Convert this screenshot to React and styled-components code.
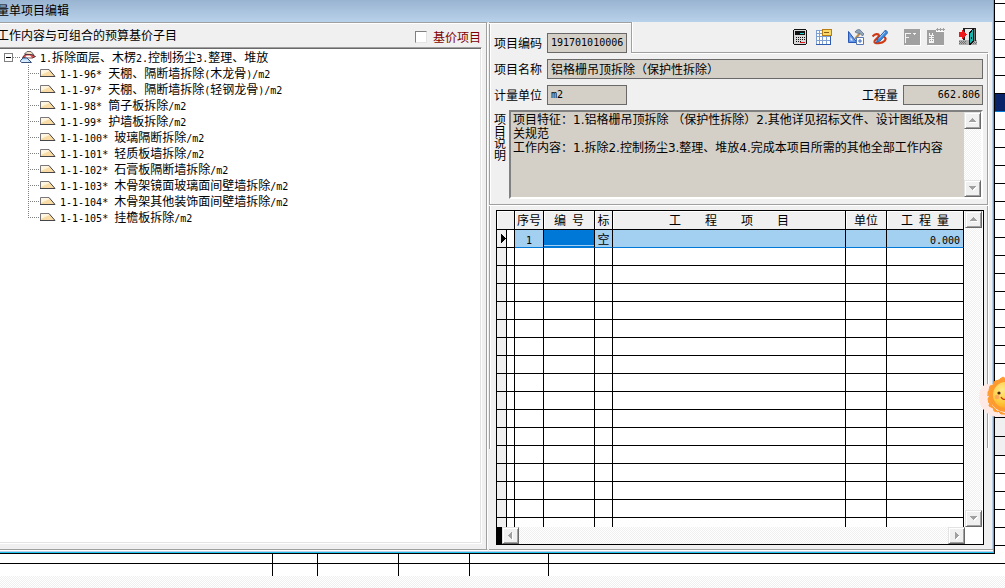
import React, { useState } from 'react';
import styled, { createGlobalStyle, css } from 'styled-components';

const items = [
    { code: '1-1-96*', name: '天棚、隔断墙拆除(木龙骨)/m2' },
    { code: '1-1-97*', name: '天棚、隔断墙拆除(轻钢龙骨)/m2' },
    { code: '1-1-98*', name: '筒子板拆除/m2' },
    { code: '1-1-99*', name: '护墙板拆除/m2' },
    { code: '1-1-100*', name: '玻璃隔断拆除/m2' },
    { code: '1-1-101*', name: '轻质板墙拆除/m2' },
    { code: '1-1-102*', name: '石膏板隔断墙拆除/m2' },
    { code: '1-1-103*', name: '木骨架镜面玻璃面间壁墙拆除/m2' },
    { code: '1-1-104*', name: '木骨架其他装饰面间壁墙拆除/m2' },
    { code: '1-1-105*', name: '挂檐板拆除/m2' },
];

const description =
    '项目特征：1.铝格栅吊顶拆除 （保护性拆除）2.其他详见招标文件、设计图纸及相关规范\n' +
    '工作内容：1.拆除2.控制扬尘3.整理、堆放4.完成本项目所需的其他全部工作内容';

const emptyRows = Array.from({ length: 15 }, (_, i) => i);

// rows of the sheet that shows behind the window
const sheetRows = [
    { h: 4 },
    ...Array.from({ length: 5 }, () => ({ h: 18 })),
    { h: 18, kind: 'selected' },
    ...Array.from({ length: 17 }, () => ({ h: 18 })),
    { h: 19, kind: 'grey' },
    { h: 19, kind: 'grey' },
    ...Array.from({ length: 5 }, () => ({ h: 18 })),
];

// latin characters are set half as wide as the chinese ones
function Mixed({ children }) {
    return children.split(/([\x20-\x7e]+)/).map((part, i) =>
        i % 2 ? <Half key={i}>{part}</Half> : part
    );
}

function Arrow({ dir }) {
    const d = {
        up: 'M4 2h1v1h1v1h1v1h1v1H1V5h1V4h1V3h1z',
        down: 'M1 2h7v1H7v1H6v1H5v1H4V5H3V4H2V3H1z',
        left: 'M6 1v7H5V7H4V6H3V5H2V4h1V3h1V2h1V1z',
        right: 'M3 1v7h1V7h1V6h1V5h1V4H6V3H5V2H4V1z',
    }[dir];
    return (
        <svg width="9" height="9" viewBox="0 0 9 9" shapeRendering="crispEdges">
            <path d={d} fill="#fff" transform="translate(1 1)" />
            <path d={d} fill="#a0a0a0" />
        </svg>
    );
}

function GroupIcon() {
    return (
        <svg width="16" height="16" viewBox="0 0 16 16">
            <path d="M4.500 5 7 2.500h4L14 6z" fill="#f3dfc0" stroke="#6a6a70" />
            <path d="M2.500 8.500 5 5.500h6.500l4 2-3 1.500z" fill="#e04b48" stroke="#57343a" />
            <path d="M5 8.500 6.500 6.500H10l2 2z" fill="#fff" />
            <path d="M.5 12.500v-1L3 9h4l4.500 4.500h-10z" fill="#b4dcff" stroke="#3a5078" />
            <path d="M2 12h6" stroke="#fff" />
        </svg>
    );
}

function ItemIcon() {
    return (
        <svg width="16" height="16" viewBox="0 0 16 16">
            <path d="M.5 11.500V4.500H9l6 7z" fill="#f8dca4" />
            <path d="M1 10V5h7.500l1 1z" fill="#fff4de" />
            <path d="M.5 11.500V4.500H9" fill="none" stroke="#77777c" />
            <path d="M9 4.500l6 7H0" fill="none" stroke="#44444a" />
        </svg>
    );
}

function CalcIcon() {
    return (
        <svg width="16" height="18" viewBox="0 0 16 18" shapeRendering="crispEdges">
            <path d="M2 1h12v1h1v14h-1v1H2v-1H1V2h1z" fill="#111" />
            <path d="M2 2h12v14H2z" fill="#d8d8d8" />
            <path d="M3 3h10v4H3z" fill="#111" />
            <path d="M8 5h4v1H8z" fill="#20d0d0" />
            <path d="M4 9h1v1H4zM6 9h1v1H6zM8 9h1v1H8zM10 9h1v1h-1zM12 9h1v1h-1zM4 11h1v1H4zM6 11h1v1H6zM8 11h1v1H8zM10 11h1v1h-1zM12 11h1v1h-1zM4 13h1v1H4zM6 13h1v1H6zM8 13h1v1H8z" fill="#111" />
            <path d="M8 14h5v1H8z" fill="#e02020" />
        </svg>
    );
}

function SheetIcon() {
    return (
        <svg width="16" height="16" viewBox="0 0 16 16" shapeRendering="crispEdges">
            <path d="M0 1h15v15H0z" fill="#7f9fd2" />
            <path d="M0 15h15v1H0zM14 7h1v9h-1z" fill="#2f5cb0" />
            <path d="M1 2h2v2H1zM4 2h2v2H4zM1 5h2v2H1zM4 5h2v2H4zM1 8h2v3H1zM4 8h2v3H4zM7 8h3v3H7zM11 8h3v3h-3zM1 12h2v3H1zM4 12h2v3H4zM7 12h3v3H7zM11 12h3v3h-3z" fill="#fff" />
            <path d="M6 0h10v7H6z" fill="#b87e14" />
            <path d="M7 1h8v5H7z" fill="#f9d968" />
            <path d="M8 3h5v1H8z" fill="#8a5c10" />
        </svg>
    );
}

function ToolsIcon() {
    return (
        <svg width="16" height="16" viewBox="0 0 16 16">
            <path d="M.5 2.500v11H9z" fill="#5f97e8" stroke="#2857b4" />
            <path d="M2.500 8v3.500H5z" fill="#f0f0f0" />
            <path d="M13 3 7 10" stroke="#b88a50" strokeWidth="2" />
            <path d="M7 3c2-3 5-3 6-1l3 3-1.500 2L12 4.500 9 4z" fill="#8fa4b8" stroke="#53687e" strokeWidth=".7" />
            <path d="M8.500 8.500h7v7h-7z" fill="#fff" stroke="#5578b4" />
            <path d="M12 10v4M10 12h4" stroke="#3868c0" />
        </svg>
    );
}

function PenIcon() {
    return (
        <svg width="16" height="16" viewBox="0 0 16 16">
            <path d="M.5 7.500C3 4.500 6.500 4.500 7 6.500c.5 2-5 4-4.500 6.500.5 2 7.500 1.500 10-1 1.500-1.500 1.500-3.500-.5-4" fill="none" stroke="#cf3a16" strokeWidth="2.200" />
            <path d="M13.500 1 16 3.500 8 12l-3.500 1.500L5.500 10z" fill="#3d8be0" stroke="#1d50a0" strokeWidth=".8" />
            <path d="m13 3-6 6.500" stroke="#a8d4ff" />
        </svg>
    );
}

function GreyFormIcon() {
    return (
        <svg width="17" height="17" viewBox="0 0 17 17" shapeRendering="crispEdges">
            <path d="M1 1h16v16H1z" fill="#fff" />
            <path d="M0 0h16v16H0z" fill="#a0a0a0" />
            <path d="M1 4h6v1H2v3h3v1H2v5H1zM9 4h3v1h-1v1h-1V5H9z" fill="#f4f4f4" />
        </svg>
    );
}

function GreyListIcon() {
    return (
        <svg width="19" height="18" viewBox="0 0 19 18" shapeRendering="crispEdges">
            <path d="M1 3h16v15H1z" fill="#fff" />
            <path d="M0 2h9v2h8v13H0z" fill="#a0a0a0" />
            <path d="M9 1h1V0h1v1h2V0h1v1h2V0h1v1h1v1h-1v1h-1V2h-2v1h-1V2h-2v1h-1V2H9z" fill="#a0a0a0" />
            <path d="M2 5h1v2h2V5h1v2h1v1H5v1h2v1H5v1h2v4H2v-4h2v-1H2V9h2V8H2z" fill="#f4f4f4" />
            <path d="M3 12h1v1H3zM5 12h1v1H5z" fill="#a0a0a0" />
        </svg>
    );
}

function ExitIcon() {
    return (
        <svg width="18" height="18" viewBox="0 0 18 18" shapeRendering="crispEdges">
            <path d="M0 12h18v5H0z" fill="#b0b0b0" />
            <path d="M0 13h1v1H0zM2 13h1v1H2zM4 13h1v1H4zM6 13h1v1H6zM1 14h1v1H1zM3 14h1v1H3zM5 14h1v1H5zM0 15h1v1H0zM2 15h1v1H2zM4 15h1v1H4zM6 15h1v1H6zM15 14h1v1h-1zM17 14h1v1h-1zM14 15h1v1h-1zM16 15h1v1h-1z" fill="#707070" />
            <path d="M4 0h13v1H4zM4 1h2v11H4z" fill="#222" />
            <path d="M6 1h7v11H6z" fill="#e8e8e8" />
            <path d="M15 1h1v12h-1z" fill="#777" />
            <path d="M16 1h1v12h-1z" fill="#222" />
            <path d="M14 0h1v14h-1v1h-1v1h-1v1h-2V4h1V3h1V2h1V1h1z" fill="#111" />
            <path d="M14 2v11h-1v1h-1v1h-1V5h1V4h1V2z" fill="#18b4ae" />
            <path d="M12 9h1v2h-1z" fill="#111" />
            <path d="M0 4h3V2h1v1h1v1h1v1h1v1h1v1H7v1H6v1H5v1H4v1H3V9H0z" fill="#f01818" />
        </svg>
    );
}

function Sun() {
    return (
        <svg width="26" height="42" viewBox="0 0 26 42">
            <defs>
                <radialGradient id="face" cx=".35" cy=".3" r=".8">
                    <stop offset="0" stopColor="#ffe98a" />
                    <stop offset=".6" stopColor="#ffc93c" />
                    <stop offset="1" stopColor="#ff9a1e" />
                </radialGradient>
            </defs>
            <path d="M10 8C2 8 0 15 0 22c0 9 8 18 18 19h8V8z" fill="#ffe9e4" />
            <g fill="#ff9a2e">
                <circle cx="27" cy="19" r="17" />
                <path d="m21 3 3-2 3 2zM14 8l2-3 5-1zM10 14l1-4 4-1zM9 20l0-4 2-3zM10 27l-1-4 2-4zM14 32l-4-2 1-5zM19 36l-4-1-1-4zM26 38l-4 0-3-3z" stroke="#ff9a2e" strokeLinejoin="round" />
            </g>
            <circle cx="27" cy="19" r="13" fill="url(#face)" />
            <circle cx="20" cy="17" r="1.600" fill="#4a2410" />
            <circle cx="18" cy="21" r="2.200" fill="#ff9d5c" opacity=".8" />
            <path d="M22 21c1 2 3 3 5 2" fill="none" stroke="#c2410c" strokeWidth="1.400" />
        </svg>
    );
}

export default function App() {
    const [open, setOpen] = useState(true);

    return (
        <Page>
            <GlobalStyle />
            <Upper>
                <Window>
                    <TitleBar>量单项目编辑</TitleBar>
                    <Body>
                        <LeftPanel>
                            <LeftHead>
                                <HeadText>工作内容与可组合的预算基价子目</HeadText>
                                <CheckLabel>
                                    <CheckBox />
                                    基价项目
                                </CheckLabel>
                            </LeftHead>
                            <Tree>
                                <RootRow>
                                    <Expander aria-label="展开" onClick={() => setOpen(!open)}>
                                        <svg width="7" height="7" viewBox="0 0 7 7" shapeRendering="crispEdges">
                                            <path d="M1 3h5v1H1z" />
                                            {!open && <path d="M3 1h1v5H3z" />}
                                        </svg>
                                    </Expander>
                                    <Dots />
                                    <GroupIcon />
                                    <NodeText>
                                        <Mixed>1.拆除面层、木楞2.控制扬尘3.整理、堆放</Mixed>
                                    </NodeText>
                                </RootRow>
                                {open && (
                                    <NodeList>
                                        {items.map((item, i) => (
                                            <Node key={item.code}>
                                                <Branch $last={i === items.length - 1} />
                                                <ItemIcon />
                                                <NodeText>
                                                    <Mixed>{`${item.code} ${item.name}`}</Mixed>
                                                </NodeText>
                                            </Node>
                                        ))}
                                    </NodeList>
                                )}
                            </Tree>
                        </LeftPanel>

                        <RightPanel>
                            <TopRow>
                                <CodeArea>
                                    <Label htmlFor="code">项目编码</Label>
                                    <Field id="code" $size="short" $latin defaultValue="191701010006" />
                                </CodeArea>
                                <Toolbar>
                                    <ToolGroup>
                                        <ToolButton aria-label="计算器"><CalcIcon /></ToolButton>
                                        <ToolButton aria-label="表格"><SheetIcon /></ToolButton>
                                    </ToolGroup>
                                    <ToolGroup>
                                        <ToolButton aria-label="工具"><ToolsIcon /></ToolButton>
                                        <ToolButton aria-label="编辑"><PenIcon /></ToolButton>
                                    </ToolGroup>
                                    <ToolGroup>
                                        <ToolButton aria-label="插入" disabled><GreyFormIcon /></ToolButton>
                                        <ToolButton aria-label="删除" disabled><GreyListIcon /></ToolButton>
                                    </ToolGroup>
                                    <ToolGroup>
                                        <ToolButton aria-label="退出"><ExitIcon /></ToolButton>
                                    </ToolGroup>
                                </Toolbar>
                            </TopRow>

                            <Form>
                                <FormRow>
                                    <Label htmlFor="name">项目名称</Label>
                                    <Field id="name" defaultValue="铝格栅吊顶拆除（保护性拆除）" />
                                </FormRow>
                                <FormRow>
                                    <Label htmlFor="unit">计量单位</Label>
                                    <Field id="unit" $size="short" $latin defaultValue="m2" />
                                    <AmountLabel htmlFor="amount">工程量</AmountLabel>
                                    <Field id="amount" $size="short" $latin $right defaultValue="662.806" />
                                </FormRow>
                                <NoteRow>
                                    <NoteLabel htmlFor="note">项目说明</NoteLabel>
                                    <NoteBox>
                                        <Note id="note" defaultValue={description} />
                                        <ScrollBar $vertical>
                                            <ScrollButton aria-label="向上"><Arrow dir="up" /></ScrollButton>
                                            <ScrollButton aria-label="向下"><Arrow dir="down" /></ScrollButton>
                                        </ScrollBar>
                                    </NoteBox>
                                </NoteRow>
                            </Form>

                            <Rule />

                            <GridFrame>
                                <GridMain>
                                    <Table>
                                        <colgroup>
                                            <Col $w={10} />
                                            <Col $w={8} />
                                            <Col $w={29} />
                                            <Col $w={51} />
                                            <Col $w={18} />
                                            <Col />
                                            <Col $w={41} />
                                            <Col $w={77} />
                                        </colgroup>
                                        <thead>
                                            <tr>
                                                <Th colSpan={2} />
                                                <Th>序号</Th>
                                                <Th><Mixed>编 号</Mixed></Th>
                                                <Th>标</Th>
                                                <Th>工　　程　　项　　目</Th>
                                                <Th>单位</Th>
                                                <Th><Mixed>工 程 量</Mixed></Th>
                                            </tr>
                                        </thead>
                                        <tbody>
                                            <tr>
                                                <Td $kind="grey">
                                                    <Pointer width="5" height="9" viewBox="0 0 5 9" shapeRendering="crispEdges">
                                                        <path d="M0 0h1v1h1v1h1v1h1v1h1v1H4v1H3v1H2v1H1v1H0z" />
                                                    </Pointer>
                                                </Td>
                                                <Td />
                                                <Td $kind="selected"><Half>1</Half></Td>
                                                <Td $kind="active" />
                                                <Td $kind="selected">空</Td>
                                                <Td $kind="selected" />
                                                <Td $kind="selected" />
                                                <Td $kind="selected" $right><Half>0.000</Half></Td>
                                            </tr>
                                            {emptyRows.map((n) => (
                                                <tr key={n}>
                                                    <Td $kind="grey" /><Td /><Td /><Td /><Td /><Td /><Td /><Td />
                                                </tr>
                                            ))}
                                            <tr>
                                                <Td $kind="grey" $cut /><Td $cut /><Td $cut /><Td $cut />
                                                <Td $cut /><Td $cut /><Td $cut /><Td $cut />
                                            </tr>
                                        </tbody>
                                    </Table>
                                    <ScrollBar $vertical>
                                        <ScrollButton aria-label="向上"><Arrow dir="up" /></ScrollButton>
                                        <ScrollButton aria-label="向下"><Arrow dir="down" /></ScrollButton>
                                    </ScrollBar>
                                </GridMain>
                                <GridFoot>
                                    <SplitHandle />
                                    <ScrollBar>
                                        <ScrollButton aria-label="向左"><Arrow dir="left" /></ScrollButton>
                                        <ScrollButton aria-label="向右"><Arrow dir="right" /></ScrollButton>
                                    </ScrollBar>
                                    <Corner />
                                </GridFoot>
                            </GridFrame>
                        </RightPanel>
                    </Body>
                </Window>
                <SheetEdge>
                    {sheetRows.map((row, i) => (
                        <SheetLine key={i} $h={row.h} $kind={row.kind} />
                    ))}
                </SheetEdge>
            </Upper>
            <SheetFoot>
                <FootRow $h={10} $line>
                    <i /><i /><i /><i /><i />
                </FootRow>
                <FootRow $h={12}>
                    <i /><i /><i /><i /><i />
                </FootRow>
                <FootScroll />
            </SheetFoot>
            <Mascot>
                <Sun />
            </Mascot>
        </Page>
    );
}

const GlobalStyle = createGlobalStyle`
    * {
        box-sizing: border-box;
    }

    body {
        margin: 0;
        background: #fff;
        color: #000;
        font-family: 'Noto Sans CJK SC', sans-serif;
        font-size: 12px;
        line-height: 16px;
    }

    button, input, textarea {
        margin: 0;
        padding: 0;
        font: inherit;
        color: inherit;
        border-radius: 0;
        outline: none;
    }

    svg {
        display: block;
        flex: none;
    }
`;

const dither = css`
    background: repeating-conic-gradient(#f0f0f0 0 25%, #fff 0 50%) 0 0 / 2px 2px;
`;

const sunken = css`
    border: 2px solid;
    border-color: #808080 #fff #fff #808080;
`;

const Half = styled.span`
    font-family: 'DejaVu Sans Mono', monospace;
    font-size: 10px;
    line-height: 10px;
    white-space: pre;
`;

const Page = styled.div`
    position: relative;
    min-height: 100vh;
    display: flex;
    flex-direction: column;
    overflow: hidden;
`;

const Upper = styled.div`
    flex: 1;
    display: flex;
`;

const Window = styled.main`
    flex: 1;
    min-width: 0;
    display: flex;
    flex-direction: column;
    background: #f0f0f0;
    border-right: 1px solid #000;
    border-bottom: 1px solid #000;
    box-shadow: inset -1px -1px #22c4ee, inset -2px -2px #b9d1ea;
    padding: 0 1px 3px 0;
`;

const TitleBar = styled.header`
    height: 22px;
    padding-top: 2px;
    text-indent: -3px;
    background: linear-gradient(#99b4d1, #b9d1ea);
`;

const Body = styled.div`
    flex: 1;
    display: grid;
    grid-template-columns: minmax(0, 488fr) minmax(0, 504fr);
    column-gap: 1px;
`;

const LeftPanel = styled.section`
    display: flex;
    flex-direction: column;
    border-top: 1px solid #a0a0a0;
    border-right: 1px solid #fff;
    border-bottom: 1px solid #a0a0a0;
    box-shadow: inset -1px 0 #a0a0a0, inset 0 1px #fff, 0 1px #fff;
    padding: 0 5px 5px 0;
`;

const LeftHead = styled.div`
    height: 24px;
    display: flex;
    align-items: center;
    justify-content: space-between;
`;

const HeadText = styled.span`
    text-indent: -3px;
    white-space: nowrap;
`;

const CheckLabel = styled.label`
    display: flex;
    align-items: center;
    gap: 6px;
    padding: 4px 1px 0 0;
    color: #800000;
    white-space: nowrap;
`;

const CheckBox = styled.input.attrs({ type: 'checkbox' })`
    appearance: none;
    width: 12px;
    height: 12px;
    background: #fff;
    border: 1px solid;
    border-color: #808080 #e3e3e3 #e3e3e3 #808080;

    &:checked {
        background: #800000;
    }
`;

const Tree = styled.div`
    flex: 1;
    background: #fff;
    border: 1px solid;
    border-color: #a0a0a0 #fff #fff transparent;
    border-left: none;
    box-shadow: inset 0 1px #696969, inset -1px -1px #e3e3e3;
    padding-top: 1px;
`;

const RootRow = styled.div`
    height: 16px;
    display: flex;
    align-items: center;
    padding-left: 4px;
`;

const Expander = styled.button`
    width: 9px;
    height: 9px;
    flex: none;
    background: #fff;
    border: 1px solid #808080;
`;

const Dots = styled.span`
    width: 7px;
    height: 1px;
    background: repeating-linear-gradient(90deg, #808080 0 1px, transparent 1px 2px);
`;

const NodeText = styled.span`
    padding-left: 4px;
    white-space: nowrap;
`;

const NodeList = styled.ul`
    list-style: none;
    margin: 0;
    padding: 0 0 0 28px;
`;

const Node = styled.li`
    height: 16px;
    display: flex;
    align-items: center;
`;

const Branch = styled.span`
    width: 12px;
    height: 16px;
    background:
        repeating-linear-gradient(#808080 0 1px, transparent 1px 2px) 0 0 / 1px ${(p) => (p.$last ? '8px' : '16px')} no-repeat,
        repeating-linear-gradient(90deg, #808080 0 1px, transparent 1px 2px) 0 8px / 12px 1px no-repeat;
`;

const RightPanel = styled.section`
    display: flex;
    flex-direction: column;
    padding: 0 5px 0 0;
    background:
        linear-gradient(90deg, #a0a0a0 50%, #fff 50%) 0 0 / 2px 427px no-repeat,
        linear-gradient(90deg, #a0a0a0 50%, #fff 50%) right 4px top 31px / 2px 395px no-repeat;
    border-bottom: 1px solid #a0a0a0;
    box-shadow: 0 1px #fff;
`;

const TopRow = styled.div`
    display: flex;
    height: 31px;
`;

const CodeArea = styled.div`
    width: 142px;
    display: flex;
    align-items: flex-start;
    border-top: 1px solid #a0a0a0;
    box-shadow: inset 0 1px #fff;
    padding: 10px 4px 0 5px;
`;

const Toolbar = styled.div`
    flex: 1;
    display: flex;
    align-items: center;
    justify-content: flex-end;
    gap: 8px;
    padding-right: 8px;
    border-left: 1px solid #a0a0a0;
    border-bottom: 1px solid #a0a0a0;
    box-shadow: inset 1px 0 #fff, 0 1px #fff;
`;

const ToolGroup = styled.div`
    display: flex;
`;

const ToolButton = styled.button`
    width: 24px;
    height: 24px;
    display: flex;
    align-items: center;
    justify-content: center;
    background: none;
    border: none;
`;

const Label = styled.label`
    width: 53px;
    flex: none;
    line-height: 20px;
    white-space: nowrap;
`;

const AmountLabel = styled(Label)`
    width: auto;
    margin-left: auto;
    padding-right: 5px;
`;

const Field = styled.input`
    width: ${(p) => (p.$size === 'short' ? '80px' : '100%')};
    min-width: 0;
    height: 20px;
    padding: 0 2px 2px 3px;
    background: #d4d0c8;
    border: 1px solid #696969;
    text-align: ${(p) => (p.$right ? 'right' : 'left')};
    ${(p) => p.$latin && css`
        font-family: 'DejaVu Sans Mono', monospace;
        font-size: 10px;
    `}
`;

const Form = styled.div`
    padding: 6px 5px 5px;
`;

const FormRow = styled.div`
    display: flex;

    & + & {
        margin-top: 6px;
    }
`;

const NoteRow = styled.div`
    display: flex;
    gap: 3px;
    margin-top: 5px;
`;

const NoteLabel = styled.label`
    width: 12px;
    line-height: 12px;
    padding-top: 3px;
    word-break: break-all;
`;

const NoteBox = styled.div`
    flex: 1;
    min-width: 0;
    height: 89px;
    display: flex;
    background: #d4d0c8;
    ${sunken}
`;

const Note = styled.textarea`
    flex: 1;
    min-width: 0;
    padding: 1px 8px 0 2px;
    background: none;
    border: none;
    resize: none;
    overflow: hidden;
    font-family: 'DejaVu Sans', 'Noto Sans CJK SC', sans-serif;
    line-height: 14px;
`;

const ScrollBar = styled.div`
    flex: ${(p) => (p.$vertical ? 'none' : '1')};
    display: flex;
    flex-direction: ${(p) => (p.$vertical ? 'column' : 'row')};
    justify-content: space-between;
    ${dither}
`;

const ScrollButton = styled.button`
    width: 17px;
    height: 17px;
    display: flex;
    align-items: center;
    justify-content: center;
    background: #f0f0f0;
    border: 1px solid;
    border-color: #e3e3e3 #696969 #696969 #e3e3e3;
    box-shadow: inset 1px 1px #fff, inset -1px -1px #a0a0a0;
`;

const Rule = styled.div`
    height: 2px;
    background: #fff;
    border-top: 1px solid #a0a0a0;
`;

const GridFrame = styled.div`
    margin: 4px 4px 3px 7px;
    background: #fff;
    border: 1px solid #000;
`;

const GridMain = styled.div`
    display: flex;
    gap: 1px;
    padding-right: 1px;
`;

const Table = styled.table`
    flex: 1;
    min-width: 0;
    table-layout: fixed;
    border-collapse: separate;
    border-spacing: 0;
`;

const Col = styled.col`
    width: ${(p) => (p.$w ? `${p.$w}px` : 'auto')};
`;

const Th = styled.th`
    height: 19px;
    padding: 0;
    font-weight: normal;
    line-height: 16px;
    white-space: pre;
    overflow: hidden;
    background: #f0f0f0;
    border-right: 1px solid #000;
    border-bottom: 1px solid #000;
    box-shadow: inset 1px 1px #fff;
`;

const cellColors = {
    grey: '#f0f0f0',
    selected: '#a3cff1',
    active: '#0078d7',
};

const Td = styled.td`
    height: ${(p) => (p.$cut ? '9px' : '18px')};
    padding: ${(p) => (p.$right ? '0 3px 0 0' : '0')};
    line-height: 16px;
    text-align: ${(p) => (p.$right ? 'right' : 'center')};
    background: ${(p) => cellColors[p.$kind] || '#fff'};
    border-right: 1px solid #000;
    border-bottom: ${(p) => (p.$cut ? 'none' : '1px solid #000')};
    ${(p) => (p.$kind === 'selected' || p.$kind === 'active') && css`
        border-bottom-color: #0078d7;
    `}
    ${(p) => p.$kind === 'active' && css`
        box-shadow: inset 0 -1px #0078d7, inset 0 -2px #a3cff1;
    `}
`;

const Pointer = styled.svg`
    margin-left: auto;
`;

const GridFoot = styled.div`
    display: flex;
`;

const SplitHandle = styled.div`
    width: 5px;
    background: #000;
`;

const Corner = styled.div`
    width: 18px;
    background: #fff;
`;

const SheetEdge = styled.div`
    width: 10px;
    flex: none;
`;

const sheetColors = {
    selected: '#0a246a',
    grey: '#f0f0f0',
};

const SheetLine = styled.div`
    height: ${(p) => p.$h}px;
    background: ${(p) => sheetColors[p.$kind] || '#fff'};
    border-bottom: 1px solid ${(p) => (p.$kind === 'selected' ? '#0078d7' : '#000')};
`;

const SheetFoot = styled.footer`
    flex: none;
`;

const FootRow = styled.div`
    height: ${(p) => p.$h}px;
    display: grid;
    grid-template-columns: 273px 45px 81px 71px 79px;
    border-bottom: ${(p) => (p.$line ? '1px solid #000' : 'none')};

    i {
        border-right: 1px solid #000;
    }
`;

const FootScroll = styled.div`
    height: 12px;
    ${dither}
`;

const Mascot = styled.div`
    position: absolute;
    top: 376px;
    right: 0;
`;
